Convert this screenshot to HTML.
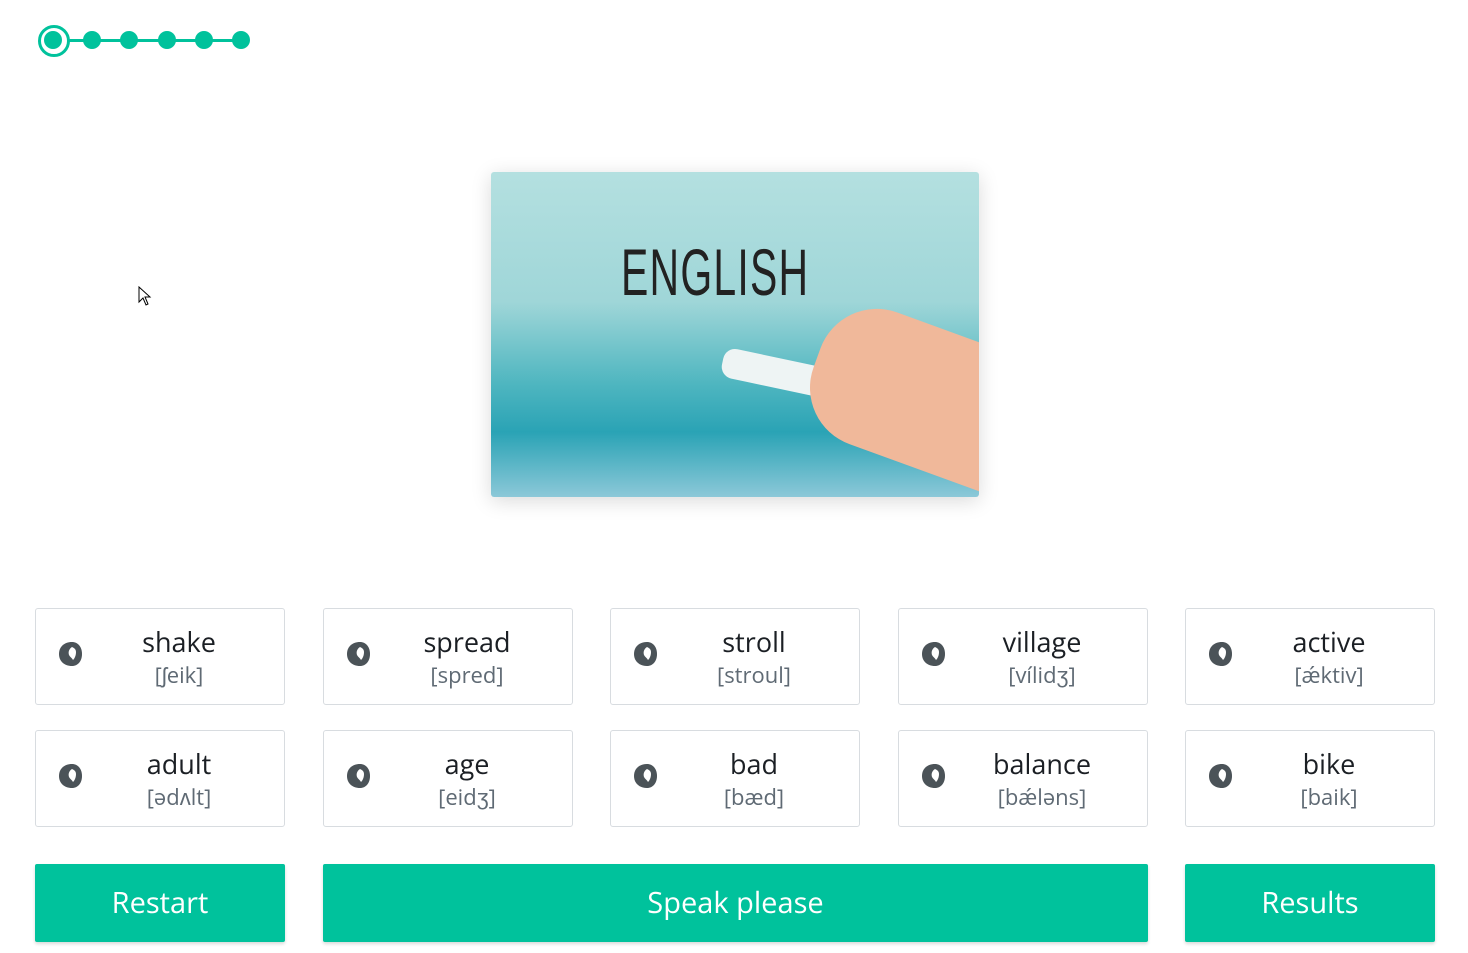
<!DOCTYPE html>
<html><head><style>
body{margin:0;width:1468px;height:953px;background:#fff;font-family:"Open Sans","Liberation Sans",sans-serif;position:relative;overflow:hidden}
.dot{position:absolute;width:18px;height:18px;border-radius:50%;background:#00c29c;top:31px}
.card{position:absolute;width:248px;height:95px;border:1px solid #d8dce0;border-radius:3px;background:#fff}
.card .w{position:absolute;left:38px;right:0;top:14px;text-align:center;font-size:27px;color:#1b1f24}
.card .t{position:absolute;left:38px;right:0;top:51px;text-align:center;font-size:22px;color:#5f6a74}
.card svg{position:absolute;left:22px;top:32px}
.btn{position:absolute;top:864px;height:78px;background:#00c29c;color:#fff;font-size:29px;text-align:center;line-height:78px;border-radius:2px;box-shadow:0 2px 3px rgba(0,0,0,.15)}
</style></head><body>
<div style="position:absolute;left:52px;top:39px;width:190px;height:3px;background:#00c29c"></div>
<div style="position:absolute;left:38px;top:25px;width:26px;height:26px;border:3px solid #00c29c;border-radius:50%;background:#fff"></div>
<div class="dot" style="left:44px;top:31px"></div>
<div class="dot" style="left:83px"></div>
<div class="dot" style="left:120px"></div>
<div class="dot" style="left:158px"></div>
<div class="dot" style="left:195px"></div>
<div class="dot" style="left:232px"></div>
<div style="position:absolute;left:491px;top:172px;width:488px;height:325px;border-radius:3px;overflow:hidden;box-shadow:0 4px 20px rgba(0,0,0,.15);background:linear-gradient(180deg,#b4e0e0 0%,#9fd6d8 40%,#4fb6c0 65%,#2aa3b5 80%,#8cc8d8 100%)">
<div style="position:absolute;left:130px;top:62px;font-size:66px;color:#222;transform:scaleX(.62);transform-origin:left;font-family:'Liberation Sans Narrow','Liberation Sans',sans-serif;letter-spacing:2px">ENGLISH</div>
<div style="position:absolute;left:230px;top:190px;width:150px;height:30px;background:#eef4f4;border-radius:12px;transform:rotate(12deg)"></div>
<div style="position:absolute;left:320px;top:150px;width:200px;height:140px;background:#f0b89a;border-radius:60px 0 0 60px;transform:rotate(20deg)"></div>
</div>
<svg style="position:absolute;left:138px;top:286px" width="14" height="20"><path d="M1 1 L1 16 L5 12 L8 19 L10 18 L7 11 L12 11 Z" fill="#fff" stroke="#000"/></svg>

<div class="card" style="left:35px;top:608px"><svg width="26" height="26" viewBox="0 0 26 26"><path d="M14 1C6 1 1 6 1 13s5 12 13 12c6 0 10-5 10-12S20 1 14 1z" fill="#4b5358"/><path d="M14 6c-3 2-4 5-3 8 1 2 3 3 4 5 2-2 3-5 3-8s-2-4-4-5z" fill="#fff"/></svg><div class="w">shake</div><div class="t">[ʃeik]</div></div>
<div class="card" style="left:323px;top:608px"><svg width="26" height="26" viewBox="0 0 26 26"><path d="M14 1C6 1 1 6 1 13s5 12 13 12c6 0 10-5 10-12S20 1 14 1z" fill="#4b5358"/><path d="M14 6c-3 2-4 5-3 8 1 2 3 3 4 5 2-2 3-5 3-8s-2-4-4-5z" fill="#fff"/></svg><div class="w">spread</div><div class="t">[spred]</div></div>
<div class="card" style="left:610px;top:608px"><svg width="26" height="26" viewBox="0 0 26 26"><path d="M14 1C6 1 1 6 1 13s5 12 13 12c6 0 10-5 10-12S20 1 14 1z" fill="#4b5358"/><path d="M14 6c-3 2-4 5-3 8 1 2 3 3 4 5 2-2 3-5 3-8s-2-4-4-5z" fill="#fff"/></svg><div class="w">stroll</div><div class="t">[stroul]</div></div>
<div class="card" style="left:898px;top:608px"><svg width="26" height="26" viewBox="0 0 26 26"><path d="M14 1C6 1 1 6 1 13s5 12 13 12c6 0 10-5 10-12S20 1 14 1z" fill="#4b5358"/><path d="M14 6c-3 2-4 5-3 8 1 2 3 3 4 5 2-2 3-5 3-8s-2-4-4-5z" fill="#fff"/></svg><div class="w">village</div><div class="t">[vílidʒ]</div></div>
<div class="card" style="left:1185px;top:608px"><svg width="26" height="26" viewBox="0 0 26 26"><path d="M14 1C6 1 1 6 1 13s5 12 13 12c6 0 10-5 10-12S20 1 14 1z" fill="#4b5358"/><path d="M14 6c-3 2-4 5-3 8 1 2 3 3 4 5 2-2 3-5 3-8s-2-4-4-5z" fill="#fff"/></svg><div class="w">active</div><div class="t">[ǽktiv]</div></div>

<div class="card" style="left:35px;top:730px"><svg width="26" height="26" viewBox="0 0 26 26"><path d="M14 1C6 1 1 6 1 13s5 12 13 12c6 0 10-5 10-12S20 1 14 1z" fill="#4b5358"/><path d="M14 6c-3 2-4 5-3 8 1 2 3 3 4 5 2-2 3-5 3-8s-2-4-4-5z" fill="#fff"/></svg><div class="w">adult</div><div class="t">[ədʌlt]</div></div>
<div class="card" style="left:323px;top:730px"><svg width="26" height="26" viewBox="0 0 26 26"><path d="M14 1C6 1 1 6 1 13s5 12 13 12c6 0 10-5 10-12S20 1 14 1z" fill="#4b5358"/><path d="M14 6c-3 2-4 5-3 8 1 2 3 3 4 5 2-2 3-5 3-8s-2-4-4-5z" fill="#fff"/></svg><div class="w">age</div><div class="t">[eidʒ]</div></div>
<div class="card" style="left:610px;top:730px"><svg width="26" height="26" viewBox="0 0 26 26"><path d="M14 1C6 1 1 6 1 13s5 12 13 12c6 0 10-5 10-12S20 1 14 1z" fill="#4b5358"/><path d="M14 6c-3 2-4 5-3 8 1 2 3 3 4 5 2-2 3-5 3-8s-2-4-4-5z" fill="#fff"/></svg><div class="w">bad</div><div class="t">[bæd]</div></div>
<div class="card" style="left:898px;top:730px"><svg width="26" height="26" viewBox="0 0 26 26"><path d="M14 1C6 1 1 6 1 13s5 12 13 12c6 0 10-5 10-12S20 1 14 1z" fill="#4b5358"/><path d="M14 6c-3 2-4 5-3 8 1 2 3 3 4 5 2-2 3-5 3-8s-2-4-4-5z" fill="#fff"/></svg><div class="w">balance</div><div class="t">[bǽləns]</div></div>
<div class="card" style="left:1185px;top:730px"><svg width="26" height="26" viewBox="0 0 26 26"><path d="M14 1C6 1 1 6 1 13s5 12 13 12c6 0 10-5 10-12S20 1 14 1z" fill="#4b5358"/><path d="M14 6c-3 2-4 5-3 8 1 2 3 3 4 5 2-2 3-5 3-8s-2-4-4-5z" fill="#fff"/></svg><div class="w">bike</div><div class="t">[baik]</div></div>

<div class="btn" style="left:35px;width:250px">Restart</div>
<div class="btn" style="left:323px;width:825px">Speak please</div>
<div class="btn" style="left:1185px;width:250px">Results</div>
</body></html>
